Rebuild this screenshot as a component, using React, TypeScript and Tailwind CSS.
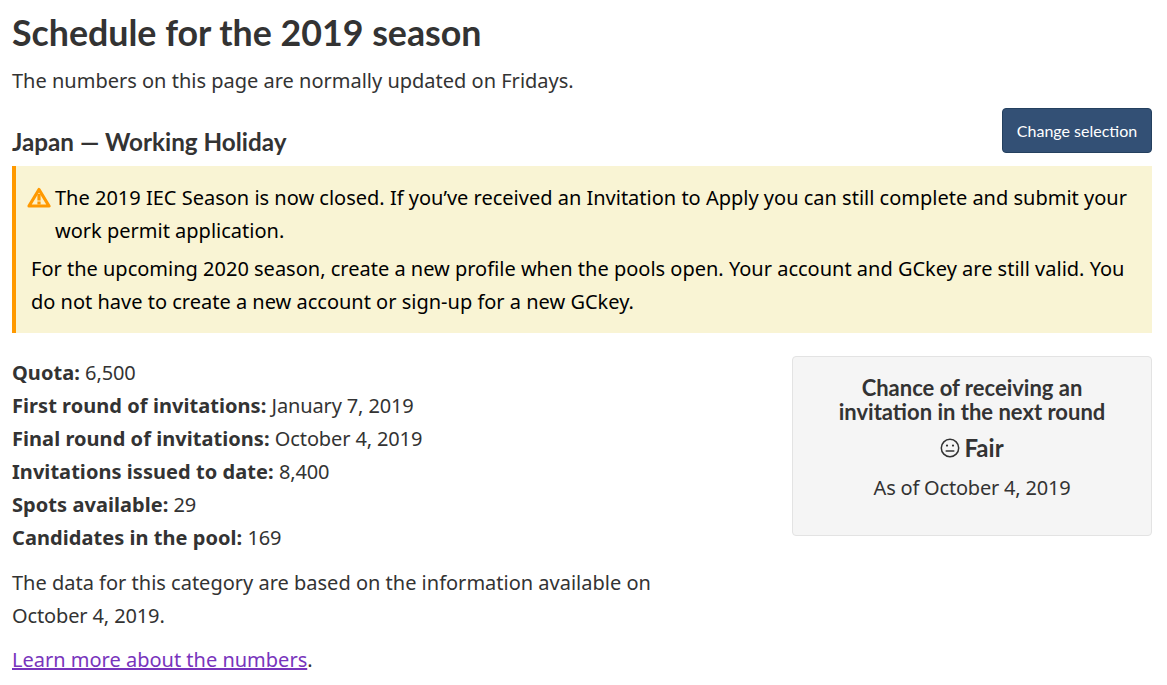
const sans = "font-['Noto_Sans',sans-serif]";

const facts = [
  ["Quota:", "6,500"],
  ["First round of invitations:", "January 7, 2019"],
  ["Final round of invitations:", "October 4, 2019"],
  ["Invitations issued to date:", "8,400"],
  ["Spots available:", "29"],
  ["Candidates in the pool:", "169"],
];

export default function App() {
  return (
    <div className={`${sans} h-[685px] overflow-hidden bg-white pl-3 pr-[15px] text-[20px] leading-[33px] text-[#333]`}>
      <h1 className="pt-[13px] font-['Lato',sans-serif] text-[35.75px] font-bold leading-[40px]">
        Schedule for the 2019 season
      </h1>
      <p className="mt-[11px] leading-[33px]">The numbers on this page are normally updated on Fridays.</p>

      <div className="flex items-start justify-between">
        <h2 className="mt-[32px] font-['Lato',sans-serif] text-[24.25px] font-bold leading-[26px]">
          Japan — Working Holiday
        </h2>
        <button className="mt-[11px] h-[45px] w-[150px] rounded border border-[#24405f] bg-[#335075] font-['Lato',sans-serif] text-[16px] text-white">
          Change selection
        </button>
      </div>

      <div className="mt-[11px] border-l-4 border-[#ff9900] bg-[#f9f4d4] pb-[15px] pl-[15px] pr-[15px] pt-[15px] text-black">
        <div className="relative pl-[24px]">
          <svg className="absolute left-[-4px] top-[6px]" width="24" height="21" viewBox="0 0 24 21" fill="none">
            <path d="M12 2.5 L22 19 H2 Z" fill="#fdf1c8" stroke="#ff9900" strokeWidth="3.2" strokeLinejoin="round" />
            <rect x="10.4" y="7" width="3.2" height="6.5" fill="#ff9900" />
            <rect x="10.4" y="14.5" width="3.2" height="3" fill="#ff9900" />
          </svg>
          The 2019 IEC Season is now closed. If you’ve received an Invitation to Apply you can still complete and submit your work permit application.
        </div>
        <p className="mt-[5px]">
          For the upcoming 2020 season, create a new profile when the pools open. Your account and GCkey are still valid. You do not have to create a new account or sign-up for a new GCkey.
        </p>
      </div>

      <div className="mt-[23px] flex items-start justify-between">
        <div className="w-[650px]">
          {facts.map(([label, value]) => (
            <div key={label}>
              <strong className="font-bold tracking-[0.05px]">{label}</strong>{" "}
              <span className="tracking-[-0.13px]">{value}</span>
            </div>
          ))}
          <p className="mt-[12px]">
            The data for this category are based on the information available on{" "}
            <span className="tracking-[-0.13px]">October 4, 2019</span>.
          </p>
          <p className="mt-[11px]">
            <a href="#" className="text-[#7834bc] underline">Learn more about the numbers</a>.
          </p>
        </div>

        <div className="h-[180px] w-[360px] rounded border border-[#e3e3e3] bg-[#f5f5f5] pt-[19px] text-center">
          <div className="font-['Lato',sans-serif] text-[22px] font-bold leading-[24px]">
            Chance of receiving an<br />invitation in the next round
          </div>
          <div className="mt-[11px] flex items-center justify-center gap-[4px] font-['Lato',sans-serif] text-[24px] font-bold leading-[26px]">
            <svg width="20" height="20" viewBox="0 0 20 20" fill="none" stroke="#333" strokeWidth="1.5">
              <circle cx="10" cy="10" r="8.7" />
              <circle cx="7" cy="7.6" r="1.1" fill="#333" stroke="none" />
              <circle cx="13" cy="7.6" r="1.1" fill="#333" stroke="none" />
              <path d="M6.2 13 H13.8" strokeLinecap="round" />
            </svg>
            Fair
          </div>
          <div className="mt-[10px] tracking-[-0.2px]">As of October 4, 2019</div>
        </div>
      </div>
    </div>
  );
}
